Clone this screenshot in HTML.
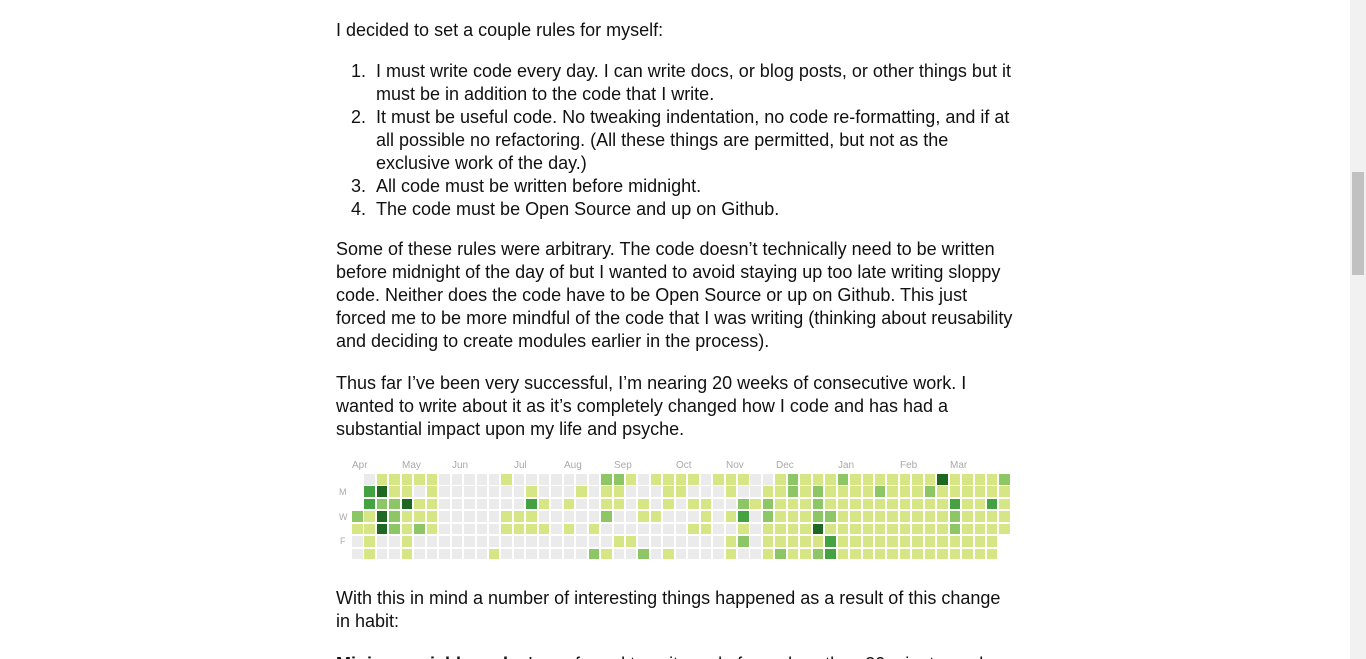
<!DOCTYPE html>
<html><head><meta charset="utf-8">
<style>
html,body{margin:0;padding:0;background:#fff;overflow:hidden}
body{width:1366px;height:659px;position:relative;font-family:"Liberation Sans",Arial,sans-serif;color:#111;font-size:18px;line-height:23px}
.t{position:absolute;left:336px;white-space:nowrap}
.li{position:absolute;left:351px;white-space:nowrap}
.li span{display:inline-block;width:25px}
.li .c{display:inline-block;width:auto;vertical-align:top}
#g div{position:absolute;width:10.5px;height:10.5px}
.m{position:absolute;font-size:10px;color:#aaa;line-height:12px}
.sb{position:absolute;left:1350px;top:0;width:16px;height:659px;background:#f1f1f1}
.th{position:absolute;left:1352px;top:172px;width:12px;height:103px;background:#c1c1c1}
</style></head><body>
<div class="t" style="top:19px">I decided to set a couple rules for myself:</div>
<div class="li" style="top:60px"><span>1.</span><span class="c">I must write code every day. I can write docs, or blog posts, or other things but it<br>must be in addition to the code that I write.</span></div>
<div class="li" style="top:106px"><span>2.</span><span class="c">It must be useful code. No tweaking indentation, no code re-formatting, and if at<br>all possible no refactoring. (All these things are permitted, but not as the<br>exclusive work of the day.)</span></div>
<div class="li" style="top:175px"><span>3.</span><span class="c">All code must be written before midnight.</span></div>
<div class="li" style="top:198px"><span>4.</span><span class="c">The code must be Open Source and up on Github.</span></div>
<div class="t" style="top:238px">Some of these rules were arbitrary. The code doesn’t technically need to be written<br>before midnight of the day of but I wanted to avoid staying up too late writing sloppy<br>code. Neither does the code have to be Open Source or up on Github. This just<br>forced me to be more mindful of the code that I was writing (thinking about reusability<br>and deciding to create modules earlier in the process).</div>
<div class="t" style="top:372px">Thus far I’ve been very successful, I’m nearing 20 weeks of consecutive work. I<br>wanted to write about it as it’s completely changed how I code and has had a<br>substantial impact upon my life and psyche.</div>
<div class="m" style="left:352px;top:460px">Apr</div>
<div class="m" style="left:402px;top:460px">May</div>
<div class="m" style="left:452px;top:460px">Jun</div>
<div class="m" style="left:514px;top:460px">Jul</div>
<div class="m" style="left:564px;top:460px">Aug</div>
<div class="m" style="left:614px;top:460px">Sep</div>
<div class="m" style="left:676px;top:460px">Oct</div>
<div class="m" style="left:726px;top:460px">Nov</div>
<div class="m" style="left:776px;top:460px">Dec</div>
<div class="m" style="left:838px;top:460px">Jan</div>
<div class="m" style="left:900px;top:460px">Feb</div>
<div class="m" style="left:950px;top:460px">Mar</div>
<div class="m" style="left:339px;top:486px;font-size:9px">M</div>
<div class="m" style="left:339px;top:511px;font-size:9px">W</div>
<div class="m" style="left:340px;top:535px;font-size:9px">F</div>
<div id="g"></div>
<div class="t" style="top:587px">With this in mind a number of interesting things happened as a result of this change<br>in habit:</div>
<div class="t" style="top:653px"><b>Minimum viable code.</b> I was forced to write code for no less than 30 minutes a day</div>
<div class="sb"></div><div class="th"></div>
<script>
var A=[
".0111110000010000000221011",
".3411010000000100010110001",
".322411000000031010011010 1".replace(' ',''),
"21421110000011100000200110",
"11421210000011110101000000",
"01001000000000000000011000",
"01001000000100000002100201"];
var B=[
"110111001211121111111411112",
"100010011212111121112111111",
"011002121112111111111131131",
"001013021112211111111121111",
"011001011114111111111121111",
"00001201111131111111111111.",
"00001001211231111111111111."];
var C=["#ebebeb","#d6e685","#8cc665","#44a340","#1e6823"];
var g=document.getElementById('g'),h='';
for(var r=0;r<7;r++){var s=A[r]+B[r];for(var c=0;c<s.length;c++){var v=s[c];if(v=='.')continue;
h+='<div style="left:'+(352+c*12.45).toFixed(1)+'px;top:'+(474+r*12.43).toFixed(1)+'px;background:'+C[+v]+'"></div>';}}
g.innerHTML=h;
</script>
</body></html>
